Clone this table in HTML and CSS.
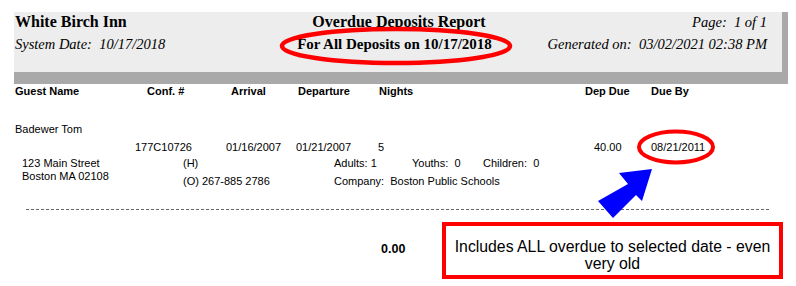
FILE: index.html
```html
<!DOCTYPE html>
<html lang="en">
<head>
<meta charset="utf-8">
<title>Overdue Deposits Report</title>
<link rel="stylesheet" href="styles.css">
</head>
<body>
<div class="page">
  <header class="report-head">
    <div class="head-panel">
      <div class="head-row row-one">
        <div class="hotel">White Birch Inn</div>
        <div class="title">Overdue Deposits Report</div>
        <div class="page-no">Page:&nbsp; 1 of 1</div>
      </div>
      <div class="head-row row-two">
        <div class="sysdate">System Date:&nbsp; 10/17/2018</div>
        <div class="subtitle">For All Deposits on 10/17/2018</div>
        <div class="generated">Generated on:&nbsp; 03/02/2021 02:38 PM</div>
      </div>
    </div>
  </header>

  <div class="col-heads">
    <div>Guest Name</div>
    <div>Conf. #</div>
    <div>Arrival</div>
    <div>Departure</div>
    <div>Nights</div>
    <div>Dep Due</div>
    <div>Due By</div>
  </div>

  <section class="guest">
    <div class="guest-name">Badewer Tom</div>
    <div class="data-row">
      <div></div>
      <div>177C10726</div>
      <div>01/16/2007</div>
      <div>01/21/2007</div>
      <div>5</div>
      <div>40.00</div>
      <div>08/21/2011</div>
    </div>
    <div class="detail">
      <div class="address">
        <div>123 Main Street</div>
        <div>Boston MA 02108</div>
      </div>
      <div class="phones">
        <div>(H)</div>
        <div>(O) 267-885 2786</div>
      </div>
      <div class="info">
        <div class="occupants">
          <div>Adults: 1</div>
          <div>Youths:&nbsp; 0</div>
          <div>Children:&nbsp; 0</div>
        </div>
        <div>Company:&nbsp; Boston Public Schools</div>
      </div>
    </div>
  </section>

  <div class="divider"></div>

  <div class="total-row">
    <div class="total">0.00</div>
  </div>

  <div class="callout">Includes ALL overdue to selected date - even very old</div>

  <svg class="marks" width="796" height="286" viewBox="0 0 796 286" aria-hidden="true">
    <ellipse cx="396" cy="46" rx="114" ry="17" fill="none" stroke="#f00" stroke-width="4.5"/>
    <ellipse cx="676" cy="147" rx="37" ry="15.5" fill="none" stroke="#f00" stroke-width="4"/>
    <polygon points="652,169 619,173 628,184 598,201 613,218 636,195 642,201" fill="#0000ff"/>
  </svg>
</div>
</body>
</html>
```

FILE: styles.css
```css
* { box-sizing: border-box; }

html, body {
  margin: 0;
  padding: 0;
  background: #fff;
}

body {
  font-family: "Liberation Sans", Arial, sans-serif;
  font-size: 11px;
  line-height: 13px;
  color: #000;
}

.page {
  position: relative;
  width: 796px;
  height: 286px;
  overflow: hidden;
}

/* ---------- report header ---------- */
.report-head {
  margin: 12px 0 0 14px;
  width: 774px;
  padding: 0 6px 12px 0;
  background: #a9a9a9;
}

.head-panel {
  height: 60px;
  background: #ededed;
  padding: 1px 15px 0 1px;
  font-family: "Liberation Serif", "Times New Roman", serif;
}

.head-row {
  display: grid;
  grid-template-columns: 1fr auto 1fr;
  line-height: 18px;
}

.row-two { margin-top: 4px; }

.hotel, .title {
  font-weight: bold;
  font-size: 16px;
}

.title { margin-left: 16px; }

.subtitle {
  font-weight: bold;
  font-size: 15px;
  margin-left: 7px;
}

.sysdate, .generated, .page-no {
  font-style: italic;
  font-size: 14.5px;
}

.page-no, .generated { text-align: right; }

/* ---------- column headers ---------- */
.col-heads {
  display: grid;
  grid-template-columns: 132px 84px 67px 81px 206px 66px auto;
  margin: 1px 0 0 15px;
  font-weight: bold;
}

/* ---------- guest block ---------- */
.guest { margin-left: 15px; }

.guest-name { margin-top: 25px; }

.data-row {
  display: grid;
  grid-template-columns: 120px 91px 70px 82px 216px 57px auto;
  margin-top: 5px;
}

.detail {
  display: grid;
  grid-template-columns: 161px 151px auto;
  margin: 3px 0 0 7px;
}

.phones, .info {
  display: flex;
  flex-direction: column;
  gap: 5px;
}

.occupants {
  display: grid;
  grid-template-columns: 78px 71px auto;
}

/* ---------- footer ---------- */
.divider {
  margin: 21px 0 0 26px;
  width: 743px;
  border-top: 1px dashed #666;
}

.total-row {
  margin: 32px 0 0 381px;
}

.total {
  font-weight: bold;
  font-size: 12.5px;
  line-height: 15px;
}

/* ---------- annotations ---------- */
.callout {
  position: absolute;
  left: 442px;
  top: 222px;
  width: 341px;
  height: 57px;
  border: 4px solid #f00;
  background: #fff;
  font-size: 15.8px;
  line-height: 17px;
  text-align: center;
  padding: 12px 6px 0;
}

.marks {
  position: absolute;
  left: 0;
  top: 0;
  pointer-events: none;
}
```
